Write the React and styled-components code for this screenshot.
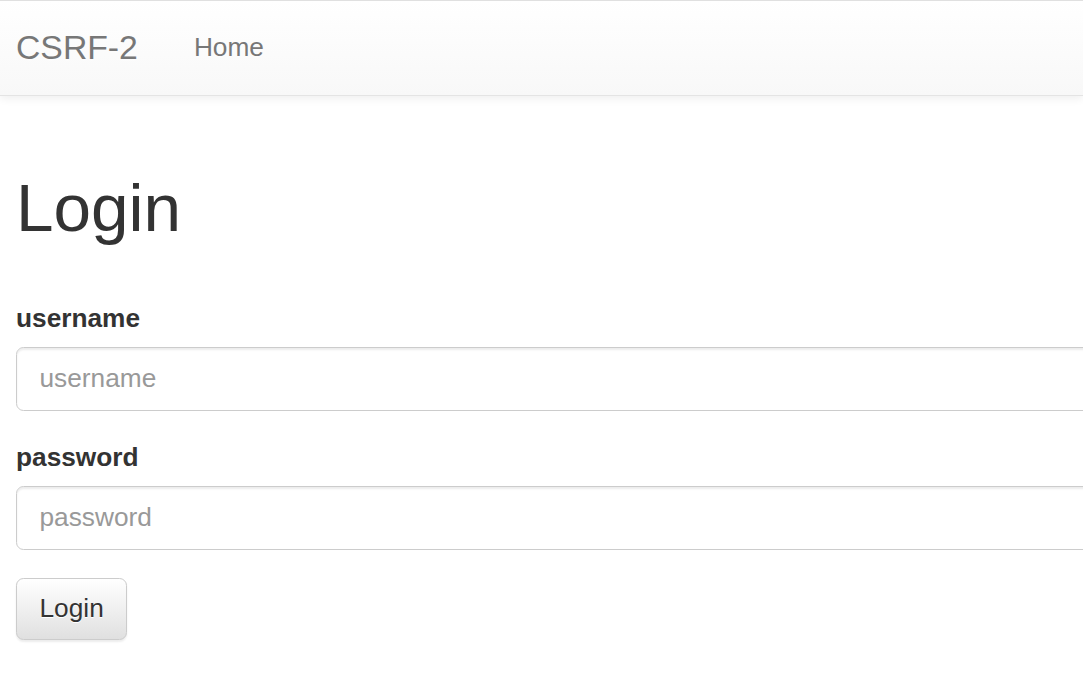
import styled, {createGlobalStyle} from "styled-components";

const GlobalStyle = createGlobalStyle`
  html, body {
    margin: 0;
    padding: 0;
    background: #fff;
    overflow-x: hidden;
  }
  body {
    font-family: "Liberation Sans", Arial, Helvetica, sans-serif;
    color: #333;
  }
  * {
    box-sizing: border-box;
  }
`

const Navbar = styled.nav`
  display: flex;
  align-items: center;
  padding-left: 16px;
  border-top: 1px solid #e0e0e0;
  border-bottom: 1px solid #e4e4e4;
  background-image: linear-gradient(to bottom, #ffffff 0, #f8f8f8 100%);
  box-shadow: inset 0 2px 0 rgba(255, 255, 255, .15), 0 2px 9px rgba(0, 0, 0, .075);
`

const Brand = styled.a`
  display: block;
  padding: 28px 28px 28px 0;
  font-size: 33.75px;
  line-height: 37.5px;
  color: #777;
  text-decoration: none;
  text-shadow: 0 2px 0 rgba(255, 255, 255, .25);
`

const NavLink = styled.a`
  display: block;
  padding: 28px;
  font-size: 26.25px;
  line-height: 37.5px;
  color: #777;
  text-decoration: none;
  text-shadow: 0 2px 0 rgba(255, 255, 255, .25);
`

const Container = styled.main`
  padding: 0 0 40px 16px;
`

const Title = styled.h1`
  margin: 74px 0 55px;
  font-size: 67.5px;
  line-height: 75px;
  font-weight: 500;
  color: #333;
`

const FormGroup = styled.div`
  margin-bottom: 28px;
`

const Label = styled.label`
  display: inline-block;
  margin-bottom: 9.5px;
  font-size: 26.25px;
  line-height: 37.5px;
  font-weight: bold;
  color: #333;
`

const Input = styled.input`
  display: block;
  width: calc(100% + 24px);
  height: 64px;
  padding: 11px 22.5px;
  font-family: inherit;
  font-size: 26.25px;
  line-height: 37.5px;
  color: #555;
  background: #fff;
  border: 1px solid #ccc;
  border-radius: 7.5px;
  box-shadow: inset 0 2px 2px rgba(0, 0, 0, .075);
  outline: none;

  &::placeholder {
    color: #999;
  }
`

const Button = styled.button`
  display: inline-block;
  padding: 11.25px 22.5px;
  font-family: inherit;
  font-size: 26.25px;
  line-height: 37.5px;
  color: #333;
  background-image: linear-gradient(to bottom, #ffffff 0, #e0e0e0 100%);
  border: 1px solid #ccc;
  border-radius: 7.5px;
  text-shadow: 0 1px 0 #fff;
  box-shadow: inset 0 2px 0 rgba(255, 255, 255, .15), 0 2px 2px rgba(0, 0, 0, .075);
  cursor: pointer;
`

export default function App() {
    return (
        <>
            <GlobalStyle/>
            <Navbar>
                <Brand href="#">CSRF-2</Brand>
                <NavLink href="#">Home</NavLink>
            </Navbar>
            <Container>
                <Title>Login</Title>
                <form onSubmit={e => e.preventDefault()}>
                    <FormGroup>
                        <Label htmlFor="username">username</Label>
                        <Input id="username" name="username" placeholder="username"/>
                    </FormGroup>
                    <FormGroup>
                        <Label htmlFor="password">password</Label>
                        <Input id="password" name="password" type="password" placeholder="password"/>
                    </FormGroup>
                    <Button type="submit">Login</Button>
                </form>
            </Container>
        </>
    )
}
